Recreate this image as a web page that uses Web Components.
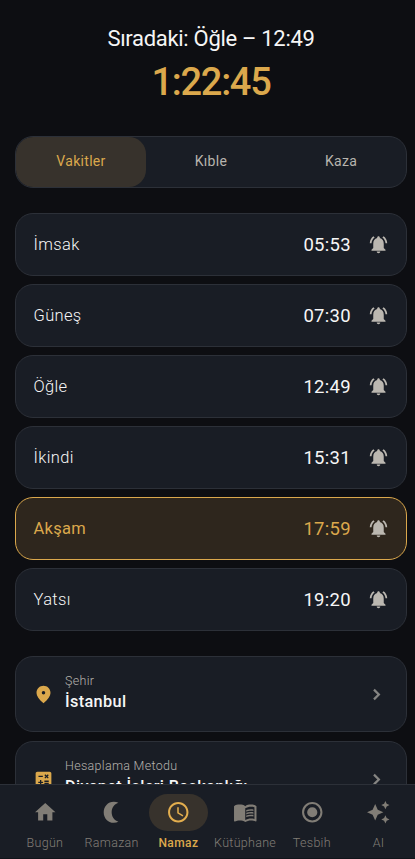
<!DOCTYPE html>
<html lang="tr"><head><meta charset="utf-8"><title>Namaz Vakitleri</title>
<style>
html,body{margin:0;height:100%;background:#0d0e12;overflow:hidden}
body{font-family:Roboto,"Liberation Sans",sans-serif;color:#f6f6f6}
</style></head><body>
<prayer-app></prayer-app>
<script>
const ICONS={
bell:'<path d="M7.58 4.08 6.15 2.65C3.75 4.48 2.17 7.3 2.03 10.5h2c.15-2.65 1.51-4.97 3.55-6.42zm12.39 6.42h2c-.15-3.2-1.73-6.02-4.12-7.85l-1.42 1.43c2.02 1.45 3.39 3.77 3.54 6.42zM18 11c0-3.07-1.64-5.64-4.5-6.32V4c0-.83-.67-1.5-1.5-1.5s-1.5.67-1.5 1.5v.68C7.63 5.36 6 7.92 6 11v5l-2 2v1h16v-1l-2-2v-5zm-6 11c1.1 0 2-.9 2-2h-4c0 1.1.9 2 2 2z"/>',
pin:'<path d="M12 2c-4.2 0-8 3.22-8 8.2 0 3.32 2.67 7.25 8 11.8 5.33-4.55 8-8.48 8-11.8C20 5.22 16.2 2 12 2zm0 10a2 2 0 1 1 0-4 2 2 0 0 1 0 4z"/>',
calc:'<path d="M19 3H5c-1.1 0-2 .9-2 2v14c0 1.1.9 2 2 2h14c1.1 0 2-.9 2-2V5c0-1.1-.9-2-2-2zm-5.97 4.06L14.09 6l1.41 1.41L16.91 6l1.06 1.06-1.41 1.41 1.41 1.41-1.06 1.06-1.41-1.4-1.41 1.41-1.06-1.06 1.41-1.41-1.41-1.42zm-6.78.66h5v1.5h-5v-1.5zM11.5 16h-2v2H8v-2H6v-1.5h2v-2h1.5v2h2V16zm6.5 1.25h-5v-1.5h5v1.5zm0-2.5h-5v-1.5h5v1.5z"/>',
chevron:'<path d="M10 5.5 8.2 7.3l4.7 4.7-4.7 4.7L10 18.5l6.5-6.5z"/>',
home:'<path d="M10 20v-6h4v6h5v-8h3L12 3 2 12h3v8z"/>',
moon:'<path d="M14.5 1.6C8.600 1.600 4.600 6.300 4.600 12s4 10.400 9.900 10.400c1.700 0 3.200-.4 4.500-1.100-4.300-1.500-6.600-5.300-6.600-9.300S14.700 4.200 19 2.700C17.700 2 16.200 1.600 14.500 1.600z"/>',
clock:'<path d="M11.99 2C6.47 2 2 6.48 2 12s4.47 10 9.99 10C17.52 22 22 17.52 22 12S17.52 2 11.99 2zM12 20c-4.42 0-8-3.58-8-8s3.58-8 8-8 8 3.58 8 8-3.58 8-8 8zm.5-13H11v6l5.25 3.15.75-1.23-4.5-2.67z"/>',
book:'<path d="M21 5c-1.11-.35-2.33-.5-3.5-.5-1.95 0-4.05.4-5.5 1.5-1.45-1.1-3.55-1.5-5.5-1.5S2.45 4.9 1 6v14.65c0 .25.25.5.5.5.1 0 .15-.05.25-.05C3.1 20.45 5.05 20 6.5 20c1.95 0 4.05.4 5.5 1.5 1.35-.85 3.8-1.5 5.5-1.5 1.65 0 3.35.3 4.75 1.05.1.05.15.05.25.05.25 0 .5-.25.5-.5V6c-.6-.45-1.25-.75-2-1zm0 13.5c-1.1-.35-2.3-.5-3.5-.5-1.7 0-4.15.65-5.5 1.5V8c1.35-.85 3.8-1.5 5.5-1.5 1.2 0 2.4.15 3.5.5v11.5z"/><path d="M17.5 10.5c.88 0 1.73.09 2.5.26V9.24c-.79-.15-1.64-.24-2.5-.24-1.7 0-3.24.29-4.5.83v1.66c1.13-.64 2.7-.99 4.5-.99zM13 12.49v1.66c1.13-.64 2.7-.99 4.5-.99.88 0 1.73.09 2.5.26V11.9c-.79-.15-1.64-.24-2.5-.24-1.7 0-3.24.3-4.5.83zm4.5 1.84c-1.7 0-3.24.29-4.5.83v1.66c1.13-.64 2.7-.99 4.5-.99.88 0 1.73.09 2.5.26v-1.52c-.79-.16-1.64-.24-2.5-.24z"/>',
radio:'<path d="M12 7a5 5 0 1 0 0 10 5 5 0 0 0 0-10zm0-5C6.48 2 2 6.48 2 12s4.48 10 10 10 10-4.48 10-10S17.52 2 12 2zm0 18a8 8 0 1 1 0-16 8 8 0 0 1 0 16z"/>',
sparkle:'<path d="m19 9 1.25-2.75L23 5l-2.75-1.25L19 1l-1.25 2.75L15 5l2.75 1.25zm0 6-1.25 2.75L15 19l2.75 1.25L19 23l1.25-2.75L23 19l-2.75-1.25zM11.5 9.5 9 4 6.5 9.5 1 12l5.5 2.5L9 20l2.5-5.5L17 12z"/>'};
class Base extends HTMLElement{
  connectedCallback(){this.attachShadow({mode:'open'}).innerHTML=`<style>:host{display:block;box-sizing:border-box}*{box-sizing:border-box}${this.css()}</style>${this.html()}`}
  a(n){return this.getAttribute(n)||''}
}
customElements.define('ui-icon',class extends Base{
  css(){return `:host{flex:none;width:var(--icon-size,21px);height:var(--icon-size,21px)}svg{display:block;width:100%;height:100%;fill:currentColor}`}
  html(){return `<svg viewBox="0 0 24 24">${ICONS[this.a('name')]}</svg>`}
});
customElements.define('next-prayer',class extends Base{
  css(){return `:host{text-align:center;padding:25px 0 0;height:136px}.t{font-size:22px;line-height:28px;letter-spacing:-.3px}.c{font-size:38px;line-height:44px;font-weight:500;letter-spacing:-1.3px;color:#dba84c;margin-top:7px}`}
  html(){return `<div class="t"><slot name="title"></slot></div><div class="c"><slot></slot></div>`}
});
customElements.define('tab-bar',class extends Base{
  css(){return `:host{display:flex;height:52px;border:1px solid #2c3038;border-radius:18px;background:#191d25;overflow:hidden}`}
  html(){return `<slot></slot>`}
});
customElements.define('tab-item',class extends Base{
  css(){return `:host{flex:1;border-radius:17px;display:grid;place-items:center;font-size:14px;line-height:20px;letter-spacing:.3px;color:#b7b4ae;padding-bottom:2px}:host([active]){background:#37322c;color:#dba84c}`}
  html(){return `<slot></slot>`}
});
customElements.define('prayer-row',class extends Base{
  css(){return `:host{display:flex;align-items:center;height:63px;border:1px solid #2c3038;border-radius:18px;background:#191d25;padding:0 17px 0 17.5px}
  .n{flex:1;font-size:16.5px;font-weight:300;letter-spacing:.35px}.t{font-size:18.5px;letter-spacing:.3px;margin-right:17px}ui-icon{color:#bbb7b0}
  :host([active]){border-color:#dba84c;background:#2e261d;color:#dba84c}:host([active]) .n{font-weight:400;letter-spacing:.3px}`}
  html(){return `<span class="n">${this.a('name')}</span><span class="t">${this.a('time')}</span><ui-icon name="bell"></ui-icon>`}
});
customElements.define('setting-row',class extends Base{
  css(){return `:host{display:flex;align-items:center;height:76px;border:1px solid #2c3038;border-radius:18px;background:#191d25;padding:0 19px 0 17px}
  .i{color:#dba84c;margin-right:11px}.b{flex:1;padding-bottom:4px}.l{font-size:12.5px;line-height:18px;font-weight:300;letter-spacing:.3px;color:#b5b2ad}.v{font-size:16.3px;line-height:23px;font-weight:500;letter-spacing:.35px}.c{color:#858482}`}
  html(){return `<ui-icon class="i" name="${this.a('icon')}"></ui-icon><div class="b"><div class="l">${this.a('label')}</div><div class="v">${this.a('value')}</div></div><ui-icon class="c" name="chevron"></ui-icon>`}
});
customElements.define('nav-item',class extends Base{
  css(){return `:host{flex:1 1 0;min-width:0;display:flex;flex-direction:column;align-items:center;color:#817d76;--icon-size:24.5px}
  .p{width:59px;height:37px;border-radius:19px;display:grid;place-items:center}.l{font-size:12.5px;line-height:16px;margin-top:4px;font-weight:300;letter-spacing:.3px;white-space:nowrap;color:#827e77}
  :host([active]){color:#e3ae4e}:host([active]) .p{background:#37322c}:host([active]) .l{font-size:12px;letter-spacing:.4px;color:#dba84c;font-weight:500}`}
  html(){return `<div class="p"><ui-icon name="${this.a('icon')}"></ui-icon></div><div class="l"><slot></slot></div>`}
});
customElements.define('bottom-nav',class extends Base{
  css(){return `:host{display:flex;height:75px;flex:none;background:#191d25;border-top:1px solid #2c3038;padding:9px 3px 0 11.5px;border-bottom:1px solid #11141a}`}
  html(){return `<slot></slot>`}
});
customElements.define('prayer-app',class extends Base{
  css(){return `:host{display:flex;flex-direction:column;height:859px;width:415px;overflow:hidden}main{flex:1;min-height:0;overflow:hidden;padding:0 8px 0 15px}
  .rows{display:grid;gap:8px;margin:25px 0}.settings{display:grid;gap:9px}`}
  html(){const t=[['İmsak','05:53'],['Güneş','07:30'],['Öğle','12:49'],['İkindi','15:31'],['Akşam','17:59'],['Yatsı','19:20']];
  return `<main><next-prayer><span slot="title">Sıradaki: Öğle – 12:49</span>1:22:45</next-prayer>
  <tab-bar><tab-item active>Vakitler</tab-item><tab-item>Kıble</tab-item><tab-item>Kaza</tab-item></tab-bar>
  <div class="rows">${t.map(([n,v])=>`<prayer-row name="${n}" time="${v}"${n==='Akşam'?' active':''}></prayer-row>`).join('')}</div>
  <div class="settings"><setting-row icon="pin" label="Şehir" value="İstanbul"></setting-row><setting-row icon="calc" label="Hesaplama Metodu" value="Diyanet İşleri Başkanlığı"></setting-row></div></main>
  <bottom-nav><nav-item icon="home">Bugün</nav-item><nav-item icon="moon">Ramazan</nav-item><nav-item icon="clock" active>Namaz</nav-item><nav-item icon="book">Kütüphane</nav-item><nav-item icon="radio">Tesbih</nav-item><nav-item icon="sparkle">AI</nav-item></bottom-nav>`}
});
</script></body></html>
